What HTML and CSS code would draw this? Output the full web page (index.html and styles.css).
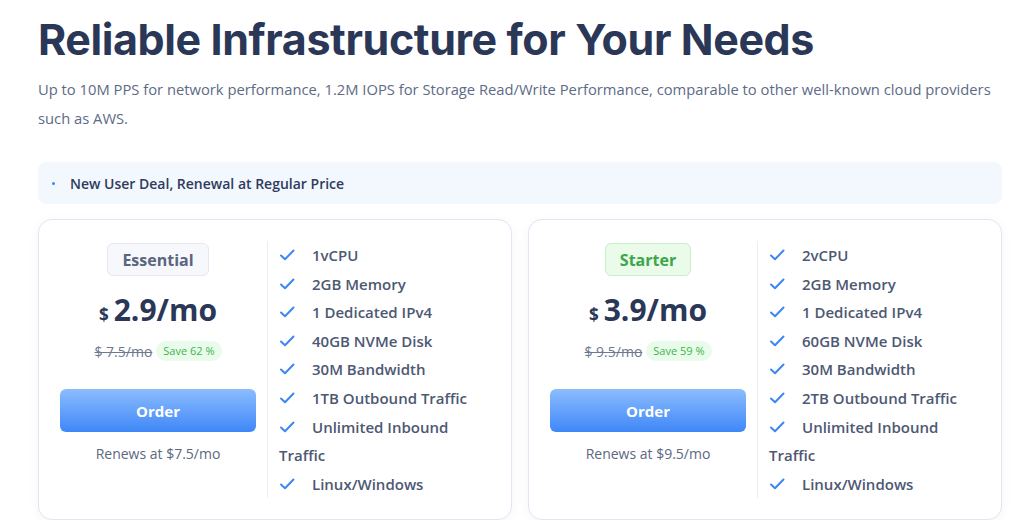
FILE: index.html
```html
<!DOCTYPE html>
<html lang="en">
<head>
<meta charset="utf-8">
<link rel="stylesheet" href="styles.css">
</head>
<body>
<main class="page">
  <h1 class="title">Reliable Infrastructure for Your Needs</h1>
  <p class="subtitle">Up to 10M PPS for network performance, 1.2M IOPS for Storage Read/Write Performance, comparable to other well-known cloud providers such as AWS.</p>
  <div class="deal"><span class="dot"></span><span>New User Deal, Renewal at Regular Price</span></div>
  <div class="cards">
    <section class="card">
      <div class="plan">
        <div class="badge">Essential</div>
        <div class="price"><span class="cur">$</span>2.9/mo</div>
        <div class="old"><s>$ 7.5/mo</s><span class="save">Save 62 %</span></div>
        <button class="order">Order</button>
        <div class="renew">Renews at $7.5/mo</div>
      </div>
      <ul class="features">
        <li><svg class="chk" viewBox="0 0 16 16"><path d="M2 8.5l4 3.8L14.5 3.5"/></svg>1vCPU</li>
        <li><svg class="chk" viewBox="0 0 16 16"><path d="M2 8.5l4 3.8L14.5 3.5"/></svg>2GB Memory</li>
        <li><svg class="chk" viewBox="0 0 16 16"><path d="M2 8.5l4 3.8L14.5 3.5"/></svg>1 Dedicated IPv4</li>
        <li><svg class="chk" viewBox="0 0 16 16"><path d="M2 8.5l4 3.8L14.5 3.5"/></svg>40GB NVMe Disk</li>
        <li><svg class="chk" viewBox="0 0 16 16"><path d="M2 8.5l4 3.8L14.5 3.5"/></svg>30M Bandwidth</li>
        <li><svg class="chk" viewBox="0 0 16 16"><path d="M2 8.5l4 3.8L14.5 3.5"/></svg>1TB Outbound Traffic</li>
        <li><svg class="chk" viewBox="0 0 16 16"><path d="M2 8.5l4 3.8L14.5 3.5"/></svg>Unlimited Inbound Traffic</li>
        <li><svg class="chk" viewBox="0 0 16 16"><path d="M2 8.5l4 3.8L14.5 3.5"/></svg>Linux/Windows</li>
      </ul>
    </section>
    <section class="card">
      <div class="plan">
        <div class="badge green">Starter</div>
        <div class="price"><span class="cur">$</span>3.9/mo</div>
        <div class="old"><s>$ 9.5/mo</s><span class="save">Save 59 %</span></div>
        <button class="order">Order</button>
        <div class="renew">Renews at $9.5/mo</div>
      </div>
      <ul class="features">
        <li><svg class="chk" viewBox="0 0 16 16"><path d="M2 8.5l4 3.8L14.5 3.5"/></svg>2vCPU</li>
        <li><svg class="chk" viewBox="0 0 16 16"><path d="M2 8.5l4 3.8L14.5 3.5"/></svg>2GB Memory</li>
        <li><svg class="chk" viewBox="0 0 16 16"><path d="M2 8.5l4 3.8L14.5 3.5"/></svg>1 Dedicated IPv4</li>
        <li><svg class="chk" viewBox="0 0 16 16"><path d="M2 8.5l4 3.8L14.5 3.5"/></svg>60GB NVMe Disk</li>
        <li><svg class="chk" viewBox="0 0 16 16"><path d="M2 8.5l4 3.8L14.5 3.5"/></svg>30M Bandwidth</li>
        <li><svg class="chk" viewBox="0 0 16 16"><path d="M2 8.5l4 3.8L14.5 3.5"/></svg>2TB Outbound Traffic</li>
        <li><svg class="chk" viewBox="0 0 16 16"><path d="M2 8.5l4 3.8L14.5 3.5"/></svg>Unlimited Inbound Traffic</li>
        <li><svg class="chk" viewBox="0 0 16 16"><path d="M2 8.5l4 3.8L14.5 3.5"/></svg>Linux/Windows</li>
      </ul>
    </section>
  </div>
</main>
</body>
</html>
```

FILE: styles.css
```css
* { box-sizing: border-box; }
html, body { margin: 0; padding: 0; background: #ffffff; }
body { font-family: "Open Sans", "Noto Sans", sans-serif; color: #2d3a5a; }
.page { padding: 10px 22px 0 38px; width: 1024px; }
.title {
  margin: 0;
  font-family: Inter, "Noto Sans", sans-serif;
  font-weight: 700;
  font-size: 43px;
  line-height: 58px;
  letter-spacing: -0.4px;
  color: #2b3757;
}
.subtitle {
  margin: 7px 0 0;
  font-size: 14.75px;
  line-height: 29px;
  color: #5d6b85;
  width: 964px;
}
.deal {
  margin-top: 29px;
  height: 42px;
  background: #f3f7fe;
  border-radius: 8px;
  display: flex;
  align-items: center;
  padding-left: 14px;
  font-size: 14px;
  font-weight: 600;
  color: #2f3b5c;
  width: 964px;
}
.dot { width: 3px; height: 3px; border-radius: 50%; background: #3d87f5; margin-right: 15px; }
.cards { display: flex; gap: 16px; margin-top: 15px; width: 964px; }
.card {
  flex: 1;
  display: flex;
  border: 1px solid #e2e5f3;
  border-radius: 14px;
  padding: 21px;
  background: #fff;
  box-shadow: 0 2px 10px rgba(120,130,170,0.08);
}
.plan {
  width: 196px;
  display: flex;
  flex-direction: column;
  align-items: center;
  border-right: 1px solid #eceef6;
  box-sizing: content-box;
  padding-right: 11px;
}
.badge {
  margin-top: 2px;
  height: 33px;
  padding: 0 14px;
  display: flex;
  align-items: center;
  border: 1px solid #e6e9f5;
  background: #f7f8fc;
  border-radius: 6px;
  font-size: 16px;
  font-weight: 700;
  color: #5a6580;
}
.badge.green { background: #eafbea; border-color: #c8f0c9; color: #3ca64c; }
.price {
  margin-top: 14px;
  font-size: 30px;
  font-weight: 700;
  color: #2b3757;
  line-height: 40px;
  display: flex;
  align-items: baseline;
}
.cur { font-size: 17px; margin-right: 5px; }
.old { margin-top: 6px; display: flex; align-items: center; font-size: 14px; color: #6f7890; }
.old s { text-decoration-thickness: 1px; }
.save {
  margin-left: 4px;
  background: #e9fbea;
  color: #3db54b;
  font-size: 11px;
  line-height: 20px;
  padding: 0 7px;
  border-radius: 10px;
}
.order {
  margin-top: 28px;
  width: 196px;
  height: 43px;
  border: 0;
  border-radius: 6px;
  background: linear-gradient(#8bbdff, #3f87f7);
  color: #fff;
  font-family: inherit;
  font-size: 15px;
  font-weight: 700;
}
.renew { margin-top: 12px; font-size: 14px; color: #5d6780; }
.features {
  list-style: none;
  margin: 0;
  padding: 0 0 0 11px;
  font-size: 15px;
  font-weight: 600;
  color: #4d5873;
  line-height: 28.6px;
  width: 220px;
}
.features li { display: block; }
.chk {
  width: 16px; height: 16px;
  vertical-align: -2px;
  margin-right: 17px;
  fill: none;
  stroke: #3d87f5;
  stroke-width: 2;
  stroke-linecap: round;
  stroke-linejoin: round;
}
```
